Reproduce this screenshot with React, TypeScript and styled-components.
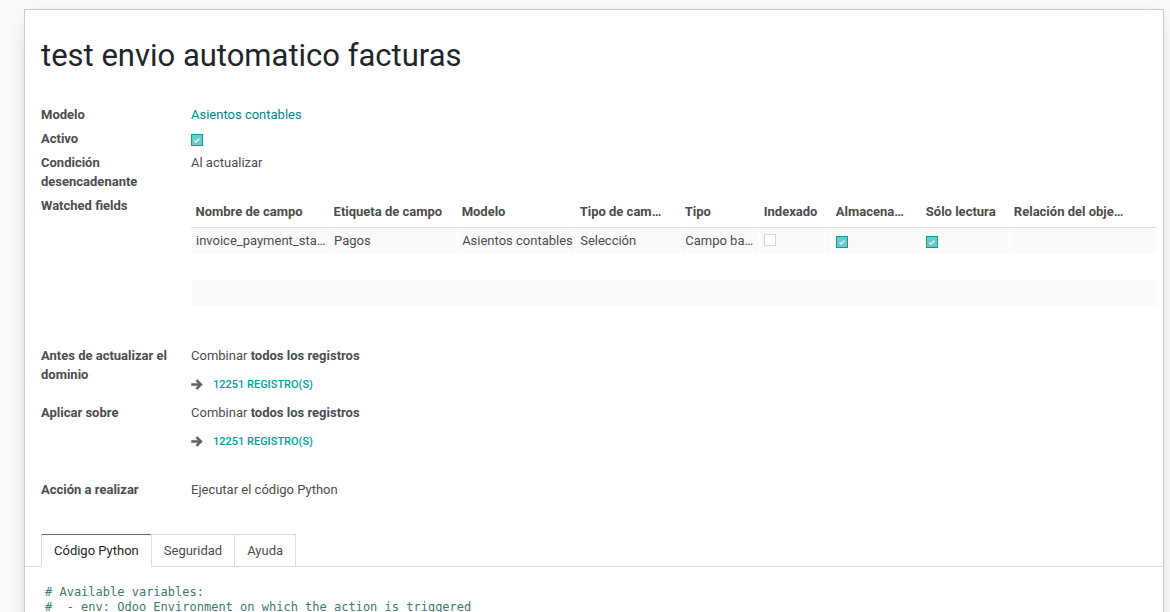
import React from 'react';
import styled, { createGlobalStyle } from 'styled-components';

const GlobalStyle = createGlobalStyle`
  html, body {
    margin: 0;
    padding: 0;
    background: #f9f9f9;
    font-family: Roboto, "Noto Sans", sans-serif;
    font-size: 13px;
    color: #4c4c4c;
  }
  * { box-sizing: border-box; }
`;

const Page = styled.div`
  height: 612px;
  overflow: hidden;
  padding: 9px 0 0 24px;
`;

const Sheet = styled.div`
  width: 1140px;
  min-height: 640px;
  background: #fff;
  border: 1px solid #ccc;
  border-bottom: none;
  box-shadow: 0 5px 20px -10px rgba(0, 0, 0, 0.35);
`;

const SheetBody = styled.div`
  padding: 28px 7px 0 16px;
`;

const Title = styled.h1`
  margin: 0 0 29px;
  font-size: 31px;
  line-height: 36px;
  font-weight: 400;
  color: #212529;
`;

const Group = styled.div<{ $gap?: number }>`
  display: grid;
  grid-template-columns: 150px 1fr;
  margin-bottom: ${({ $gap }) => $gap ?? 0}px;
`;

const Label = styled.div<{ $offset?: number }>`
  padding: 2px 10px 3px 0;
  margin-top: ${({ $offset }) => $offset ?? 0}px;
  line-height: 19px;
  font-weight: 700;
  color: #4c4c4c;
`;

const Value = styled.div<{ $offset?: number }>`
  padding: 2px 0 3px;
  margin-top: ${({ $offset }) => $offset ?? 0}px;
  line-height: 19px;
  color: #4c4c4c;
  min-width: 0;
`;

const Link = styled.a`
  color: #00868b;
  text-decoration: none;
`;

const CheckBox = styled.span<{ $checked?: boolean }>`
  display: inline-flex;
  align-items: center;
  justify-content: center;
  width: 12px;
  height: 12px;
  border: 1px solid ${({ $checked }) => ($checked ? '#00a09d' : '#d6d6d6')};
  background: ${({ $checked }) => ($checked ? '#6dc9c6' : '#fff')};
  vertical-align: -1px;
`;

const Check = ({ checked }: { checked?: boolean }) => (
  <CheckBox $checked={checked}>
    {checked && (
      <svg width="8" height="8" viewBox="0 0 8 8">
        <path d="M1.5 4.5 L3 6 L6.5 2.5" stroke="#e8f7f6" strokeWidth="1.3" fill="none" />
      </svg>
    )}
  </CheckBox>
);

const Table = styled.table`
  width: 100%;
  border-collapse: collapse;
  table-layout: fixed;
`;

const Th = styled.th`
  padding: 8px 4px 7px;
  text-align: left;
  font-weight: 700;
  color: #4c4c4c;
  line-height: 16px;
  white-space: nowrap;
  overflow: hidden;
  text-overflow: ellipsis;
  border-bottom: 1px solid #dcdcdc;
  box-shadow: 0 1px 1px rgba(0, 0, 0, 0.04);
`;

const Tr = styled.tr<{ $striped?: boolean }>`
  height: 26px;
  background: ${({ $striped }) => ($striped ? '#fafafa' : '#fff')};
`;

const Td = styled.td`
  padding: 4px 2px 4px 4px;
  line-height: 17px;
  white-space: nowrap;
  overflow: hidden;
  text-overflow: ellipsis;
  color: #4c4c4c;
  border-left: 1px solid #fff;

  &:last-child {
    border-left: none;
  }
`;

const Clip = styled.span<{ $max?: number }>`
  display: inline-block;
  max-width: ${({ $max }) => ($max ? `${$max}px` : '100%')};
  overflow: hidden;
  text-overflow: ellipsis;
  white-space: nowrap;
  vertical-align: top;
`;

const Strong = styled.b`
  font-weight: 700;
`;

const DomainLink = styled.div`
  display: flex;
  align-items: center;
  gap: 10px;
  margin: 12px 0 5px;
  color: #5f5f5f;
  line-height: 16px;
`;

const RecordsLink = styled.a`
  color: #00a09d;
  font-size: 11px;
  font-weight: 500;
  text-transform: uppercase;
  text-decoration: none;
`;

const Arrow = () => (
  <svg width="12" height="11" viewBox="0 0 12 11">
    <path
      d="M6.2 0.6 L11.4 5.5 L6.2 10.4 L4.8 9 L7.6 6.6 H0.6 V4.4 H7.6 L4.8 2 Z"
      fill="currentColor"
      stroke="currentColor"
      strokeWidth="0.6"
      strokeLinejoin="round"
    />
  </svg>
);

const Notebook = styled.div`
  margin-top: 32px;
`;

const TabBar = styled.div`
  display: flex;
  padding-left: 16px;
  border-bottom: 1px solid #dcdcdc;
`;

const Tab = styled.div<{ $active?: boolean }>`
  padding: 0 12px;
  height: 33px;
  line-height: 31px;
  margin-bottom: -1px;
  margin-right: -1px;
  border: 1px solid #dcdcdc;
  border-top-color: ${({ $active }) => ($active ? '#875a7b' : '#dcdcdc')};
  border-bottom-color: ${({ $active }) => ($active ? '#fff' : '#dcdcdc')};
  background: #fff;
  color: ${({ $active }) => ($active ? '#212529' : '#4c4c4c')};
`;

const Code = styled.pre`
  margin: 0;
  padding: 18px 0 0 20px;
  font-family: "DejaVu Sans Mono", "Liberation Mono", monospace;
  font-size: 12px;
  line-height: 15px;
  color: #3c7b6f;
`;

const columns = [
  { title: 'Nombre de campo', width: 138 },
  { title: 'Etiqueta de campo', width: 128 },
  { title: 'Modelo', width: 118 },
  { title: 'Tipo de campo', width: 105, max: 84 },
  { title: 'Tipo', width: 79 },
  { title: 'Indexado', width: 72 },
  { title: 'Almacenado', width: 90, max: 70 },
  { title: 'Sólo lectura', width: 88 },
  { title: 'Relación del objeto', width: 122, max: 110 },
  { title: '', width: 24 },
];

const codeLines = [
  '# Available variables:',
  '#  - env: Odoo Environment on which the action is triggered',
];

const EmptyRow = ({ striped }: { striped?: boolean }) => (
  <Tr $striped={striped}>
    <Td colSpan={columns.length} />
  </Tr>
);

const DomainValue = () => (
  <>
    Combinar <Strong>todos los registros</Strong>
    <DomainLink>
      <Arrow />
      <RecordsLink>12251 registro(s)</RecordsLink>
    </DomainLink>
  </>
);

export default function App() {
  return (
    <>
      <GlobalStyle />
      <Page>
        <Sheet>
          <SheetBody>
            <Title>test envio automatico facturas</Title>

            <Group>
              <Label>Modelo</Label>
              <Value>
                <Link>Asientos contables</Link>
              </Value>
              <Label>Activo</Label>
              <Value>
                <Check checked />
              </Value>
              <Label>Condición desencadenante</Label>
              <Value>Al actualizar</Value>
              <Label>Watched fields</Label>
              <Value>
                <Table>
                  <colgroup>
                    {columns.map((c, i) => (
                      <col key={i} style={{ width: c.width }} />
                    ))}
                  </colgroup>
                  <thead>
                    <tr>
                      {columns.map((c, i) => (
                        <Th key={i}>
                          <Clip $max={c.max}>{c.title}</Clip>
                        </Th>
                      ))}
                    </tr>
                  </thead>
                  <tbody>
                    <Tr $striped>
                      <Td>invoice_payment_state</Td>
                      <Td>Pagos</Td>
                      <Td>Asientos contables</Td>
                      <Td>Selección</Td>
                      <Td>
                        <Clip $max={70}>Campo base</Clip>
                      </Td>
                      <Td>
                        <Check />
                      </Td>
                      <Td>
                        <Check checked />
                      </Td>
                      <Td>
                        <Check checked />
                      </Td>
                      <Td />
                      <Td />
                    </Tr>
                    <EmptyRow />
                    <EmptyRow striped />
                    <EmptyRow />
                  </tbody>
                </Table>
              </Value>
            </Group>

            <Group $gap={20}>
              <Label $offset={9}>Antes de actualizar el dominio</Label>
              <Value $offset={9}>
                <DomainValue />
              </Value>
              <Label>Aplicar sobre</Label>
              <Value>
                <DomainValue />
              </Value>
            </Group>

            <Group>
              <Label>Acción a realizar</Label>
              <Value>Ejecutar el código Python</Value>
            </Group>
          </SheetBody>

          <Notebook>
            <TabBar>
              <Tab $active>Código Python</Tab>
              <Tab>Seguridad</Tab>
              <Tab>Ayuda</Tab>
            </TabBar>
            <Code>{codeLines.join('\n')}</Code>
          </Notebook>
        </Sheet>
      </Page>
    </>
  );
}
